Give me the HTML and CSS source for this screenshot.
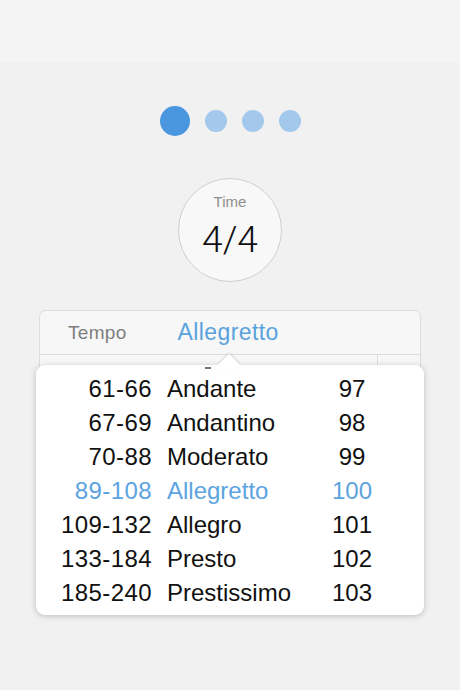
FILE: index.html
```html
<!DOCTYPE html>
<html lang="en">
<head>
<meta charset="utf-8">
<link rel="stylesheet" href="styles.css">
</head>
<body>
<div class="topbar"></div>

<div class="dots">
	<span class="dot current"></span>
	<span class="dot"></span>
	<span class="dot"></span>
	<span class="dot"></span>
</div>

<div class="time">
	<div class="time-label">Time</div>
	<div class="time-value">4/4</div>
</div>

<div class="card">
	<div class="card-head">
		<span class="head-label">Tempo</span>
		<span class="head-value">Allegretto</span>
	</div>
	<div class="card-row">
		<span class="row-split"></span>
	</div>

	<div class="popover">
		<span class="arrow"></span>
		<span class="peek"></span>
		<div class="tempo-list">
			<div class="tempo"><span class="range">61-66</span><span class="name">Andante</span><span class="bpm">97</span></div>
			<div class="tempo"><span class="range">67-69</span><span class="name">Andantino</span><span class="bpm">98</span></div>
			<div class="tempo"><span class="range">70-88</span><span class="name">Moderato</span><span class="bpm">99</span></div>
			<div class="tempo picked"><span class="range">89-108</span><span class="name">Allegretto</span><span class="bpm">100</span></div>
			<div class="tempo"><span class="range">109-132</span><span class="name">Allegro</span><span class="bpm">101</span></div>
			<div class="tempo"><span class="range">133-184</span><span class="name">Presto</span><span class="bpm">102</span></div>
			<div class="tempo"><span class="range">185-240</span><span class="name">Prestissimo</span><span class="bpm">103</span></div>
		</div>
	</div>
</div>
</body>
</html>
```

FILE: styles.css
```css
body { margin: 0px; background-color: #F1F1F1; font-family: "Liberation Sans", Arial, sans-serif;
       color: #111111; height: 690px; overflow: hidden; }

.topbar { height: 62px; background-color: #F4F4F4; }

/* page dots */
.dots { display: flex; align-items: center; justify-content: center; gap: 15px;
        margin-top: 44px; height: 30px; }
.dot { width: 22px; height: 22px; border-radius: 50%; background-color: #A3C8EC; }
.dot.current { width: 30px; height: 30px; background-color: #4A97DF; }

/* time signature */
.time { width: 102px; height: 102px; margin: 42px auto 0px auto; border-radius: 50%;
        border: 1px solid #CFCFCF; background-color: #F8F8F8;
        display: flex; flex-direction: column; align-items: center; }
.time-label { margin-top: 14px; font-size: 15px; color: #8E8E8E; }
.time-value { margin-top: 8px; font-family: Roboto, "Liberation Sans", sans-serif; font-weight: 300;
              font-size: 37px; color: #111111; }

/* tempo card */
.card { position: relative; margin: 28px 39px 0px 39px; height: 290px;
        background-color: #F7F7F7; border: 1px solid #DDDDDD; border-radius: 7px; }
.card-head { height: 43px; display: flex; align-items: center; gap: 51px; padding-left: 28px;
             border-bottom: 1px solid #DCDCDC; }
.head-label { font-size: 19px; color: #7E7E7E; letter-spacing: 0.3px; }
.head-value { font-size: 23px; color: #5AA2DD; letter-spacing: 0.4px; }
.card-row { height: 40px; display: flex; }
.row-split { margin-left: 337px; width: 1px; background-color: #DDDDDD; }

/* picker popover */
.popover { position: absolute; left: -4px; top: 54px; width: 388px; height: 250px;
           background-color: #FFFFFF; border-radius: 9px;
           box-shadow: 0px 1px 6px rgba(0, 0, 0, 0.22); }
.arrow { position: absolute; left: 185px; top: -8px; width: 16px; height: 16px;
         background-color: #FFFFFF; transform: rotate(45deg);
         box-shadow: -1px -1px 2px rgba(0, 0, 0, 0.12); }
.peek { position: absolute; left: 169px; top: 2px; width: 6px; height: 2px; background-color: #777777; }

.tempo-list { position: relative; padding-top: 7px; }
.tempo { display: grid; grid-template-columns: 116px 138px 64px; column-gap: 15px;
         height: 34px; align-items: center; font-size: 24px; }
.tempo .range { text-align: right; letter-spacing: 0.4px; }
.tempo .bpm { text-align: center; }
.tempo.picked { color: #5CA3DF; }
```
